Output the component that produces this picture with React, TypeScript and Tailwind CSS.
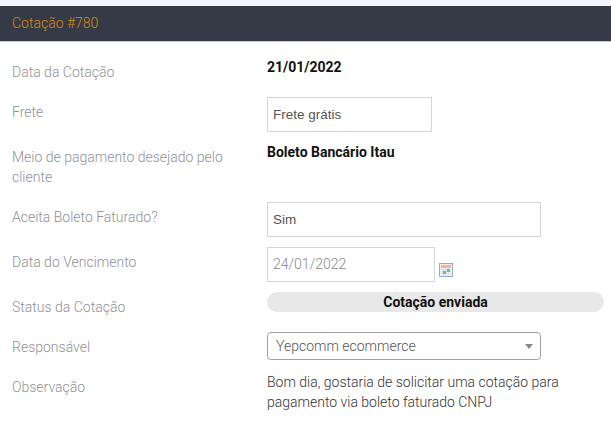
import React from "react";

function Label({ children }: { children: React.ReactNode }) {
  return <div className="w-[255px] shrink-0 pt-[5px] pr-[30px] text-[14px] leading-[20px] font-light text-[#8f9196]">{children}</div>;
}

function CalendarIcon() {
  return (
    <svg width="15" height="15" viewBox="0 0 15 15" className="ml-[4px] mb-[4px] self-end">
      <rect x="0.5" y="0.5" width="13" height="13" fill="#eef3fa" stroke="#8fabd6" />
      <rect x="2" y="2" width="10" height="3" fill="#f5b58a" />
      <path d="M2 6.5h10M2 8.5h10M2 10.5h10M4 5v8M6.5 5v8M9 5v8" stroke="#d3deee" strokeWidth="1" />
      <rect x="8" y="6" width="3" height="3" fill="#7cb87c" />
      <rect x="4" y="8" width="3" height="3" fill="#7cb87c" />
    </svg>
  );
}

const inputCls = "h-[35px] border border-[#d6d6da] bg-white pl-[5px] pt-[1px] flex items-center text-[13.5px] text-[#555555] font-['Liberation_Sans',sans-serif]";

export default function App() {
  return (
    <div className="min-h-[424px] bg-white font-['Roboto',sans-serif]">
      <div className="h-[6px] bg-[#f0f3f8]" />
      <div className="h-[36px] bg-[#343a46] border-b border-[#c9c9c9] pl-[12px] flex items-center text-[14px] font-light text-[#d98a12]">Cotação #780</div>

      <div className="pl-[12px] pt-[15px]">
        <div className="flex h-[40px]">
          <Label>Data da Cotação</Label>
          <div className="text-[14px] leading-[20px] font-bold text-[#111111]">21/01/2022</div>
        </div>
        <div className="flex h-[45px]">
          <Label>Frete</Label>
          <div className={`${inputCls} w-[165px]`}>Frete grátis</div>
        </div>
        <div className="flex h-[60px]">
          <Label>Meio de pagamento desejado pelo cliente</Label>
          <div className="text-[14px] leading-[20px] font-bold text-[#111111]">Boleto Bancário Itau</div>
        </div>
        <div className="flex h-[45px]">
          <Label>Aceita Boleto Faturado?</Label>
          <div className={`${inputCls} w-[274px]`}>Sim</div>
        </div>
        <div className="flex h-[45px]">
          <Label>Data do Vencimento</Label>
          <div className="flex h-[35px]">
            <div className="h-[35px] w-[168px] border border-[#d6d6da] bg-white pl-[5px] flex items-center text-[14px] font-light text-[#888888]">24/01/2022</div>
            <CalendarIcon />
          </div>
        </div>
        <div className="flex h-[40px]">
          <Label>Status da Cotação</Label>
          <div className="h-[20px] w-[337px] rounded-full bg-[#e8e8e8] flex items-center justify-center text-[14px] font-bold text-[#111111]">Cotação enviada</div>
        </div>
        <div className="flex h-[40px]">
          <Label>Responsável</Label>
          <div className="relative h-[28px] w-[274px] rounded-[4px] border border-[#a0a0a0] bg-white pl-[8px] flex items-center text-[14px] font-light text-[#555555]">
            Yepcomm ecommerce
            <span className="absolute right-[7px] top-[11px] h-0 w-0 border-x-[4px] border-t-[5px] border-x-transparent border-t-[#888888]" />
          </div>
        </div>
        <div className="flex">
          <Label>Observação</Label>
          <div className="w-[320px] text-[14px] leading-[20px] font-light text-[#333333]">Bom dia, gostaria de solicitar uma cotação para pagamento via boleto faturado CNPJ</div>
        </div>
      </div>
    </div>
  );
}
